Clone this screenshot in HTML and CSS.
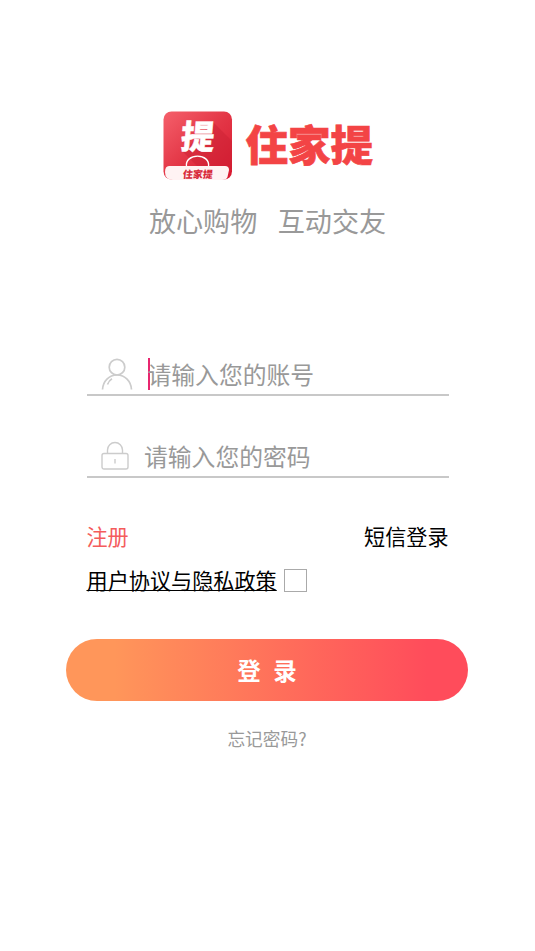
FILE: index.html
```html
<!DOCTYPE html>
<html lang="zh-CN">
<head>
<meta charset="utf-8">
<title>住家提</title>
<link rel="stylesheet" href="styles.css">
</head>
<body>
<main class="page">
  <header class="brand">
    <svg class="logo" viewBox="0 0 70 70">
      <defs>
        <linearGradient id="tile" x1="0" y1="0" x2="1" y2="1"><stop offset="0" stop-color="#f5606b"/><stop offset=".5" stop-color="#e33646"/><stop offset="1" stop-color="#d8182f"/></linearGradient>
        <clipPath id="round"><rect x="0.5" y="0.5" width="68.5" height="68" rx="8"/></clipPath>
      </defs>
      <rect x="0.5" y="0.5" width="68.5" height="68" rx="8" fill="url(#tile)"/>
      <path d="M50 11 70 31V58H37L20 41Z" fill="#c71f32" opacity=".42" clip-path="url(#round)"/>
      <path d="M23.5 56C21 41.500 48 41.500 45.500 56" fill="none" stroke="#fff" stroke-width="1.4"/>
      <path d="M6 55H62Q66 55 66 59L64.500 66Q63.500 69 59 69H10Q2 69 2 61Q2 55 6 55Z" fill="#fff3f3"/>
      <text class="logo-main" transform="translate(17 37.500) skewX(-5)">提</text>
      <text class="logo-sub" transform="translate(19.5 66.5) skewX(-6)">住家提</text>
    </svg>
    <h1 class="wordmark">住家提</h1>
  </header>
  <p class="tagline"><span>放心购物</span><span>互动交友</span></p>
  <form class="form">
    <label class="field">
      <svg class="user" viewBox="0 0 32 32"><g fill="none" stroke="#ccc" stroke-width="1.7"><circle cx="16" cy="9.2" r="7.8"/><path d="M1.5 31.5C2 23 8 17 16 17S30 23 30.5 31.5M6.500 26.500Q8 22.500 11 20.800"/></g></svg>
      <span class="caret"></span><span class="hint">请输入您的账号</span>
    </label>
    <label class="field second">
      <svg class="lock" viewBox="0 0 28 29"><g fill="none" stroke="#ccc" stroke-width="1.4"><rect x="1" y="12.5" width="26" height="15.5" rx="2"/><path d="M6.5 12.5V9a7.5 7.5 0 0 1 15 0v3.5M14 18v4.5"/></g></svg>
      <span class="hint">请输入您的密码</span>
    </label>
    <div class="links"><span class="register">注册</span><span>短信登录</span></div>
    <div class="terms"><span class="policy">用户协议与隐私政策</span><span class="check"></span></div>
  </form>
  <button class="login">登 录</button>
  <span class="forgot">忘记密码?</span>
</main>
</body>
</html>
```
FILE: styles.css
```css
* { box-sizing: border-box; }
body { margin: 0; background: #fff; font-family: "Noto Sans CJK SC", sans-serif; color: #000; }
.page { width: 535px; height: 951px; display: flex; flex-direction: column; align-items: center; padding-top: 111px; }
.brand { display: flex; align-items: center; width: 210px; height: 70px; }
.logo { width: 70px; height: 70px; flex: none; overflow: visible; }
.logo-main { font-size: 33.5px; font-weight: 900; fill: #fff; stroke: #fff; stroke-width: .5px; }
.logo-sub { font-size: 10px; font-weight: 900; fill: #d82b3b; }
.wordmark { margin: -6px 0 0 13px; font-size: 42.5px; line-height: 60px; font-weight: 900; color: #f34445; -webkit-text-stroke: .6px #f34445; white-space: nowrap; }
.tagline { margin: 20px 0 0; display: flex; gap: 20.5px; font-size: 27.1px; line-height: 40px; color: #999; }
.form { width: 362px; margin-top: 113px; }
.field { display: flex; align-items: center; height: 42px; border-bottom: 2px solid #c8c8c8; color: #999; font-size: 23.8px; line-height: 38px; }
.user { width: 32px; height: 32px; margin-left: 14px; flex: none; }
.caret { width: 2px; height: 32px; margin-left: 15px; background: #e8266f; }
.caret + .hint { margin-left: -2px; }
.second { margin-top: 40px; }
.lock { width: 28px; height: 29px; margin: -1px 15px 0 14.5px; flex: none; }
.links { display: flex; justify-content: space-between; margin-top: 42px; font-size: 21.1px; line-height: 32px; }
.register { color: #f45c5c; }
.terms { display: flex; align-items: center; margin-top: 12px; height: 32px; font-size: 21.15px; line-height: 32px; }
.policy { text-decoration: underline; text-decoration-thickness: 1px; }
.check { width: 23px; height: 23px; margin-left: 7px; border: 1px solid #aaa; }
.login { width: 402px; height: 62px; margin: 43px 1px 0 0; border: 0; border-radius: 31px; background: linear-gradient(90deg, #ff965a 12%, #ff4c5b 90%); color: #fff; font: 700 23.5px/62px "Noto Sans CJK SC", sans-serif; padding: 0; word-spacing: 7px; }
.forgot { margin: 23px 1px 0 0; font-size: 17.7px; line-height: 28px; color: #999; }
```
